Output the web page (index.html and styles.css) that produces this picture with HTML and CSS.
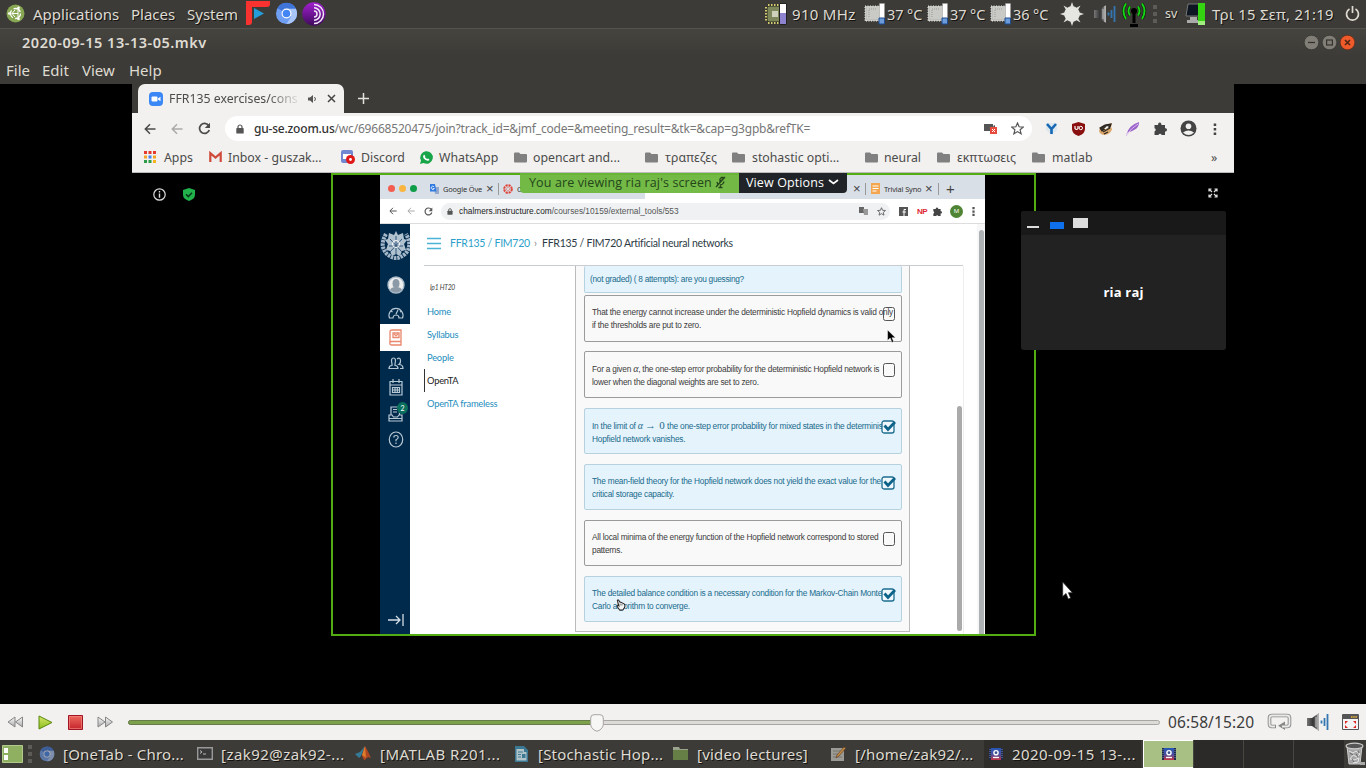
FILE: index.html
```html
<!DOCTYPE html>
<html lang="en">
<head>
<meta charset="utf-8">
<title>2020-09-15 13-13-05.mkv</title>
<link rel="stylesheet" href="styles.css">
</head>
<body>
<svg class="defs" aria-hidden="true">
  <defs>
    <linearGradient id="gray" x2="0" y2="1"><stop stop-color="#fafafa"/><stop offset="1" stop-color="#aaa"/></linearGradient>
    <linearGradient id="lime" x2="0" y2="1"><stop stop-color="#d5e86a"/><stop offset="1" stop-color="#8dbd1c"/></linearGradient>
    <linearGradient id="red" x2="0" y2="1"><stop stop-color="#ee6a5f"/><stop offset="1" stop-color="#c5232b"/></linearGradient>
    <linearGradient id="purple" x2="0" y2="1"><stop stop-color="#a21fd0"/><stop offset="1" stop-color="#3f0a5c"/></linearGradient>
    <linearGradient id="dark" x2="1" y2="0"><stop stop-color="#777"/><stop offset=".5" stop-color="#333"/><stop offset="1" stop-color="#999"/></linearGradient>
    <linearGradient id="film" x2="0" y2="1"><stop stop-color="#2558b5"/><stop offset=".55" stop-color="#4b4fa0"/><stop offset="1" stop-color="#c5333f"/></linearGradient>
  </defs>
  <symbol id="folder" viewBox="0 0 13 11"><path d="M0 1.500Q0 .5 1 .5h4l1.500 1.500h5.500q1 0 1 1v6.500q0 1-1 1H1q-1 0-1-1z" fill="#808080"/></symbol>
  <symbol id="lock" viewBox="0 0 8 10"><path d="M2 4.500V3a2 2 0 0 1 4 0v1.500" fill="none" stroke="#555" stroke-width="1.200"/><rect x=".3" y="4" width="7.400" height="5.600" rx=".7" fill="#555"/></symbol>
  <symbol id="back" viewBox="0 0 12 12"><path d="M11.500 6H1.500M6 1.200 1.300 6 6 10.800" fill="none" stroke="currentColor" stroke-width="1.500"/></symbol>
  <symbol id="reload" viewBox="0 0 13 13"><path d="M10.600 3.500A5 5 0 1 0 11.300 8" fill="none" stroke="currentColor" stroke-width="1.700"/><path d="M12 .8v5.200H6.800z" fill="currentColor"/></symbol>
  <symbol id="star" viewBox="0 0 13 13"><path d="m6.500 1 1.600 3.800 4.100.3-3.100 2.700 1 4-3.600-2.200-3.600 2.200 1-4L.8 5.100l4.100-.3z" fill="none" stroke="#555" stroke-width="1.200"/></symbol>
  <symbol id="puzzle" viewBox="0 0 13 13"><path d="M.5 3h3.700a1.700 1.700 0 1 1 3.100 0H11v3.300a1.600 1.600 0 1 1 0 3.100V13H7.600a1.600 1.600 0 0 0-3.100 0h-4V9.400a1.600 1.600 0 0 0 0-3.100z" fill="#444"/></symbol>
  <symbol id="sensor" viewBox="0 0 21 22"><path d="M1 3h16v15H1z" fill="#bdbdb9" stroke="#eee" stroke-dasharray="1 1.500"/><path d="M3 4h13v12H3z" fill="#c9c9c6"/><path d="M5 14V6h8" fill="none" stroke="#999" stroke-dasharray="1 1"/><path d="M15.500.5h5v16h-5z" fill="#fff" stroke="#999" stroke-width=".5"/><path d="M15 15h5.500v6H15z" fill="#6b9bd8" stroke="#1e4c93"/></symbol>
  <symbol id="chromium" viewBox="0 0 24 24"><circle cx="12" cy="12" r="11" fill="#6f9ff2"/><path d="M12 12 2.500 6.500A11 11 0 0 1 22 7z" fill="#3f74d8"/><path d="M12 7h9.800a11 11 0 0 1-9.800 16l5-8z" fill="#a9c6fb"/><circle cx="12" cy="12" r="5.200" fill="#fff"/><circle cx="12" cy="12" r="4" fill="#4285f4"/></symbol>
  <symbol id="movie" viewBox="0 0 14 12"><path d="M0 0h14v12H0z" fill="#202b49"/><path d="M2 0h10v12H2z" fill="url(#film)"/><path d="M1 1v10M13 1v10" stroke="#7187bd" stroke-dasharray="1 1"/><circle cx="7" cy="4.700" r="2.100" fill="#39538b" stroke="#fff" stroke-width="1.400"/><path d="M4 9.500h6" stroke="#fff" stroke-width="1.300"/></symbol>
  <symbol id="speaker" viewBox="0 0 23 20"><path d="M1 6h5l7-5v18l-7-5H1z" fill="url(#dark)"/><path d="M10 5v10M12 2v16" stroke="#ddd" stroke-width=".8"/><path d="M15.500 8.500v3M18.500 6v8M21.500 2v16" stroke="#3476b2" stroke-width="1.800"/></symbol>
  <symbol id="check" viewBox="0 0 15 15"><rect x="1" y="2" width="12" height="12" rx="2" fill="#f1f8fd" stroke="#1b6d8f" stroke-width="1.300"/><path d="m3.500 6.500 3.500 4L14 3" fill="none" stroke="#0c638a" stroke-width="2.800"/></symbol>
  <symbol id="canvas-ring" viewBox="0 0 10 10"><circle cx="5" cy="5" r="3.800" fill="none" stroke="#e0453b" stroke-width="2" stroke-dasharray="2.200 .785"/><circle cx="5" cy="5" r="1.700" fill="none" stroke="#e0453b" stroke-width=".8" stroke-dasharray=".8 .535"/></symbol>
</svg>

<header class="panel">
  <svg class="ic" width="19" height="19" viewBox="0 0 19 19"><circle cx="9.500" cy="9.500" r="9" fill="#87a752"/><circle cx="9.500" cy="9.500" r="5" fill="none" stroke="#fff" stroke-width="1.300" stroke-dasharray="8 2.500"/><path d="M9 6l-3 3.500L9 13M6 9.500h6M12 6v7" fill="none" stroke="#fff"/><circle cx="3.200" cy="9.500" r="1.300" fill="#fff"/><circle cx="12.500" cy="3.800" r="1.300" fill="#fff"/><circle cx="12.500" cy="15" r="1.300" fill="#fff"/></svg>
  <span>Applications</span><span>Places</span><span class="sys">System</span>
  <svg class="ic up" width="24" height="24" viewBox="0 0 24 24"><path d="M0 0h24v3q0 3-3 3H6v15q0 3-3 3H0z" fill="#f8332f"/><path d="m8 7 10 5.500L8 18z" fill="#249ddb"/></svg>
  <svg class="ic" width="23" height="23"><use href="#chromium"/></svg>
  <svg class="ic" width="24" height="24" viewBox="0 0 24 24"><circle cx="12" cy="12" r="11.700" fill="url(#purple)"/><path d="M12 2.500a9.500 9.500 0 0 1 0 19M12 5.800a6.200 6.200 0 0 1 0 12.400M12 9a3 3 0 0 1 0 6" fill="none" stroke="#f2e6f8" stroke-width="1.500"/></svg>
  <i></i>
  <svg class="ic" width="24" height="22" viewBox="0 0 24 22"><rect x="3" y="3" width="14" height="16" rx="2" fill="#7d875b" stroke="#252819"/><path d="M4 2h12M4 20h12M2 4v14" stroke="#d8cc73" stroke-width="2" stroke-dasharray="1.500 1.500"/><path d="M8 8h6v6H8z" fill="#cfd1bd"/><path d="M15.500.5h7v21h-7z" fill="#fff" stroke="#222"/><path d="M16 10h6v11h-6z" fill="#8d83cf"/></svg>
  <span class="freq">910 MHz</span>
  <svg class="ic" width="21" height="22"><use href="#sensor"/></svg><span class="tight">37 °C</span>
  <svg class="ic" width="21" height="22"><use href="#sensor"/></svg><span class="tight">37 °C</span>
  <svg class="ic" width="21" height="22"><use href="#sensor"/></svg><span class="tight">36 °C</span>
  <svg class="ic" width="24" height="24" viewBox="0 0 24 24"><path d="m12 0 1.800 5h-3.600zM12 24l-1.800-5h3.600zM0 12l5-1.800v3.600zM24 12l-5 1.800v-3.600zM3.500 3.500 8 6 6 8zM20.500 3.500 18 8l-2-2zM3.500 20.500 6 16l2 2zM20.500 20.500 16 18l2-2z" fill="#ddd"/><circle cx="12" cy="12" r="7.800" fill="#e5e5e1"/></svg>
  <svg class="ic" width="23" height="20"><use href="#speaker"/></svg>
  <svg class="ic" width="24" height="26" viewBox="0 0 24 26"><path d="M12 9v13M8 24.500h8" stroke="#000" stroke-width="3"/><circle cx="12" cy="10" r="3" fill="#000"/><path d="M8 5.500q-3 4.500 0 9M16 5.500q3 4.500 0 9M4 2.500Q-1 10 4 18M20 2.500q5 7.500 0 15.500" fill="none" stroke="#0c2a08" stroke-width="3"/><path d="M8 5.500q-3 4.500 0 9M16 5.500q3 4.500 0 9M4 2.500Q-1 10 4 18M20 2.500q5 7.500 0 15.500" fill="none" stroke="#15d915" stroke-width="1.800"/></svg>
  <b class="grip"></b>
  <span class="sv">sv</span>
  <svg class="ic" width="22" height="22" viewBox="0 0 22 22"><path d="M3 1h12v12H1z" fill="#0e1523" stroke="#777"/><path d="M5 14h7v3h3v3H2v-3h3z" fill="#aaa"/><path d="M13 0h7v22h-7z" fill="#35d410"/><path d="M13 18h7v4h-7z" fill="#a1ee80"/></svg>
  <span class="date">Τρι 15 Σεπ, 21:19</span>
  <svg class="ic" width="15" height="17" viewBox="0 0 15 17"><path d="M4.500 4a6 6 0 1 0 6 0M7.500 1v7" fill="none" stroke="#dfdbd2" stroke-width="1.700"/></svg>
</header>

<div class="titlebar">
  <span class="title">2020-09-15 13-13-05.mkv</span>
  <span class="wbtns">
    <svg width="15" height="15" viewBox="0 0 15 15"><circle cx="7.500" cy="7.500" r="7.300" fill="#807e76" stroke="#31302c" stroke-width=".7"/><path d="M4 7.500h7" stroke="#34332f" stroke-width="1.300"/></svg>
    <svg width="15" height="15" viewBox="0 0 15 15"><circle cx="7.500" cy="7.500" r="7.300" fill="#807e76" stroke="#31302c" stroke-width=".7"/><rect x="4.600" y="5" width="5.800" height="5" fill="none" stroke="#34332f" stroke-width="1.200"/></svg>
    <svg width="15" height="15" viewBox="0 0 15 15"><circle cx="7.500" cy="7.500" r="7.300" fill="#ee5a2a" stroke="#5b2a18" stroke-width=".7"/><path d="m5 5 5 5M10 5l-5 5" stroke="#4c2415" stroke-width="1.500"/></svg>
  </span>
</div>
<nav class="menubar"><span>File</span><span>Edit</span><span>View</span><span>Help</span></nav>

<main class="video">
  <section class="chrome">
    <div class="strip">
      <div class="tab">
        <svg width="14" height="14" viewBox="0 0 14 14"><rect width="14" height="14" rx="4" fill="#3b87f5"/><rect x="2.500" y="4.500" width="6" height="5" rx="1" fill="#fff"/><path d="m9 6.500 2.500-1.700v4.400L9 7.500z" fill="#fff"/></svg>
        <span class="tabname">FFR135 exercises/cons</span>
        <svg width="9" height="8" viewBox="0 0 9 8"><path d="M0 2.500h2L5 0v8L2 5.500H0z" fill="#555"/><path d="M6.500 2q2 2 0 4" fill="none" stroke="#555"/></svg>
        <svg width="9" height="9" viewBox="0 0 9 9"><path d="m1 1 7 7M8 1 1 8" stroke="#444" stroke-width="1.500"/></svg>
      </div>
      <svg class="plus" width="11" height="11" viewBox="0 0 11 11"><path d="M5.500 0v11M0 5.500h11" stroke="#e4e2dc" stroke-width="1.500"/></svg>
    </div>
    <div class="bar">
      <svg width="12" height="12"><use href="#back"/></svg>
      <svg class="fwd" width="12" height="12"><use href="#back"/></svg>
      <svg width="13" height="13"><use href="#reload"/></svg>
      <div class="omni">
        <svg width="8" height="10"><use href="#lock"/></svg>
        <span class="url"><b>gu-se.zoom.us</b>/wc/69668520475/join?track_id=&amp;jmf_code=&amp;meeting_result=&amp;tk=&amp;cap=g3gpb&amp;refTK=</span>
        <svg width="13" height="11" viewBox="0 0 13 11"><path d="M0 1h9v7H0zM9 3l2-1v5z" fill="#555"/><path d="M6 4h7v7H6z" fill="#e64b3c"/><path d="m8 6 3 3M11 6 8 9" stroke="#fff"/></svg>
        <svg width="13" height="13"><use href="#star"/></svg>
      </div>
      <svg width="13" height="14" viewBox="0 0 13 14"><path d="M1 1h11v7l-5.500 5L1 8z" fill="#dde7ee"/><path d="m2 2 4.500 5L11 2M6.500 6v6" fill="none" stroke="#1767b4" stroke-width="2.600"/></svg>
      <svg width="13" height="14" viewBox="0 0 13 14"><path d="M6.500 0 13 2v5q0 5-6.500 7Q0 12 0 7V2z" fill="#8a1010"/><path d="M3 4v2.500q1.500 2 3 0V4" fill="none" stroke="#fff" stroke-width="1.200"/><circle cx="8.800" cy="6" r="1.700" fill="none" stroke="#fff"/></svg>
      <svg width="14" height="12" viewBox="0 0 14 12"><path d="M0 8q1-5 6-6l7-2-1 4 1 2q-1 5-7 6-5 0-6-4z" fill="#dba96c"/><path d="m1 5 5-3 6-1-1 3-4 1-4 3zM4 9l7-4M5 11l4-2" stroke="#2b2520" stroke-width="1.200" fill="#39322b"/><path d="m5 6 3-3 2 1-3 2z" fill="#fff"/></svg>
      <svg width="14" height="14" viewBox="0 0 14 14"><path d="M0 13Q3 3 13 0q0 6-5 8-3 2-6 2z" fill="#9b61ca"/><path d="M0 14Q5 6 12 2" stroke="#d9bdee" fill="none"/></svg>
      <svg width="13" height="13"><use href="#puzzle"/></svg>
      <svg width="17" height="17" viewBox="0 0 17 17"><circle cx="8.500" cy="8.500" r="8" fill="#444"/><circle cx="8.500" cy="6.200" r="2.800" fill="#f2f1ef"/><path d="M3 12.500q5.500-4 11 0-5.500 5-11 0" fill="#f2f1ef"/></svg>
      <svg width="4" height="12" viewBox="0 0 4 12"><path d="M.7.500h2.500v2.500H.7zM.7 5h2.500v2.500H.7zM.7 9.500h2.500V12H.7z" fill="#444"/></svg>
    </div>
    <div class="marks">
      <svg width="12" height="12" viewBox="0 0 12 12"><path d="M0 1.500h12" stroke="#e33b2e" stroke-width="3" stroke-dasharray="3 1.500"/><path d="M0 6h3M9 6h3" stroke="#f5a623" stroke-width="3"/><path d="M4.500 6h3" stroke="#4285f4" stroke-width="3"/><path d="M0 10.500h7.500" stroke="#2d9b48" stroke-width="3" stroke-dasharray="3 1.500"/><path d="M9 10.500h3" stroke="#f5b41f" stroke-width="3"/></svg><span>Apps</span>
      <svg width="13" height="10" viewBox="0 0 13 10"><path d="M1 0h11v10H1z" fill="#eee"/><path d="M1.300 10V1.200l5.200 4.300 5.200-4.300V10" fill="none" stroke="#cf4a3a" stroke-width="2.200"/></svg><span>Inbox - guszak...</span>
      <svg width="14" height="14" viewBox="0 0 14 14"><rect width="12" height="13" rx="2" fill="#7187d2"/><path d="M2 4h8v5H2z" fill="#fff"/><circle cx="9.500" cy="9.500" r="4.500" fill="#e01717"/><circle cx="9.500" cy="9.500" r="1.400" fill="#fff"/></svg><span>Discord</span>
      <svg width="13" height="13" viewBox="0 0 13 13"><path d="M0 13 1 9.500A6.300 6.300 0 1 1 3.500 12z" fill="#18a54a"/><path d="M4 3.500 5.300 5 5 6.200l2 1.800 1.200-.4 1.400 1.300q-1.500 1.600-4 .1T3 5.500z" fill="#fff"/></svg><span>WhatsApp</span>
      <svg width="13" height="11"><use href="#folder"/></svg><span>opencart and...</span>
      <svg width="13" height="11"><use href="#folder"/></svg><span>τραπεζες</span>
      <svg width="13" height="11"><use href="#folder"/></svg><span>stohastic opti...</span>
      <svg width="13" height="11"><use href="#folder"/></svg><span>neural</span>
      <svg width="13" height="11"><use href="#folder"/></svg><span>εκπτωσεις</span>
      <svg width="13" height="11"><use href="#folder"/></svg><span>matlab</span>
      <span class="more">»</span>
    </div>
  </section>

  <section class="meeting">
    <div class="badges">
      <svg width="13" height="13" viewBox="0 0 13 13"><circle cx="6.500" cy="6.500" r="5.700" fill="none" stroke="#ddd" stroke-width="1.200"/><path d="M6.500 5.500v4.200M6.500 3v1.400" stroke="#ddd" stroke-width="1.400"/></svg>
      <svg width="12" height="13" viewBox="0 0 12 13"><path d="m6 0 6 2v4.500Q12 11 6 13 0 11 0 6.500V2z" fill="#22b24c"/><path d="m3 6.300 2.300 2.300L9 4.700" fill="none" stroke="#06391a" stroke-width="1.500"/></svg>
    </div>
    <div class="frame">
      <div class="shared">
        <div class="mtabs">
          <i class="dot r"></i><i class="dot y"></i><i class="dot g"></i>
          <svg width="9" height="10" viewBox="0 0 9 10"><path d="M4 3h5v7H5z" fill="#95aaca"/><path d="M0 0h5l1.500 7.500H0z" fill="#317be1"/><path d="M4 2.800A1.600 1.600 0 1 0 4.300 4.500H2.800" stroke="#fff" fill="none" stroke-width=".8"/></svg><span>Google Öve</span><em>×</em><hr>
          <svg width="10" height="10"><use href="#canvas-ring"/></svg><span>C</span>
          <div class="activetab"></div>
          <em>×</em><hr><svg width="9" height="11" viewBox="0 0 9 11"><path d="M0 0h9v11H0z" fill="#f3a64f"/><path d="M1.500 3h6M1.500 5.500h6M1.500 8h4" stroke="#fff"/></svg><span>Trivial Syno</span><em>×</em><hr><em class="mplus">+</em>
        </div>
        <div class="mbar">
          <svg width="8" height="8"><use href="#back"/></svg>
          <svg class="fwd" width="8" height="8"><use href="#back"/></svg>
          <svg width="9" height="9"><use href="#reload"/></svg>
          <div class="momni"><svg width="6" height="7"><use href="#lock"/></svg><span><b>chalmers.instructure.com</b>/courses/10159/external_tools/553</span>
            <svg width="9" height="8" viewBox="0 0 9 8"><path d="M0 0h5v6H0z" fill="#666"/><path d="M4 2h5v6H5z" fill="#999"/></svg><svg width="9" height="9"><use href="#star"/></svg></div>
          <svg width="9" height="9" viewBox="0 0 9 9"><path d="M0 0h9v9H0z" fill="#555"/><path d="M5 9V2.500h2M3.500 5H7" stroke="#fff" fill="none"/></svg>
          <strong>NP</strong>
          <svg width="9" height="9"><use href="#puzzle"/></svg>
          <span class="ava">M</span>
          <svg width="3" height="9" viewBox="0 0 4 12"><path d="M.5 0h3v3h-3zM.5 4.500h3v3h-3zM.5 9h3v3h-3z" fill="#555"/></svg>
        </div>
        <div class="lms">
          <aside class="rail">
            <svg class="crest" width="30" height="34" viewBox="0 0 30 34"><path d="M5 5Q-2 17 6 25q9 8 18 0 8-8 1-20" fill="none" stroke="#a5b8c9" stroke-width="4" stroke-dasharray="2.500 .8"/><path d="M15 2l2 4 5-2 1 6 3 1-3 4 2 6-4 1-2 5-4-2-4 2-2-5-4-1 2-6-3-4 3-1 1-6 5 2z" fill="#b0c1cf"/><path d="m9 10 12 13M21 10 9 23M15 7v18M8 17h14" stroke="#33577a" stroke-width="1"/><circle cx="15" cy="15" r="3.500" fill="none" stroke="#fff"/></svg>
            <svg width="18" height="20" viewBox="0 0 18 20"><circle cx="9" cy="10" r="8" fill="#eee" stroke="#a9bbc9" stroke-width="1.400"/><ellipse cx="9" cy="8.500" rx="3.500" ry="4.500" fill="#8c9aa7"/><path d="M3 15q1-3 6-3t6 3q-6 5-12 0" fill="#8c9aa7"/></svg>
            <svg width="16" height="13" viewBox="0 0 16 13" fill="none" stroke="#b7c8d5" stroke-width="1.200"><path d="M1.500 12a7 7 0 1 1 13 0H11a3 3 0 0 0-6 0zM8 8l2-4M3 5l1.500 1M12 6l1.500-1"/></svg>
            <div class="sel"><svg width="13" height="17" viewBox="0 0 13 17" fill="none" stroke="#e9866b" stroke-width="1.300"><path d="M12 13V1H3Q1 1 1 3v11M12 12.500H2.500a1.700 1.700 0 1 0 0 3.500H12v-3M4 4h6v4.500H4z"/><path d="m5 5 2 1.700L9 5"/></svg></div>
            <svg width="16" height="13" viewBox="0 0 16 13" fill="none" stroke="#b7c8d5" stroke-width="1.200"><path d="M1 11.500q0-3 3-3V7Q2.500 1 5.500 1T7 7v1.500q3 0 3 3zM9 2q3-2 3.500 1T11 7.500q4 0 4 4h-3"/></svg>
            <svg width="14" height="17" viewBox="0 0 14 17" fill="none" stroke="#b7c8d5" stroke-width="1.200"><path d="M1 2.500h12V16H1zM1 6h12M4 0v4M10 0v4M3.500 8.500h7v5h-7zM6 8v6M8.300 8v6M3 11h8"/></svg>
            <div class="inbox"><svg width="15" height="16" viewBox="0 0 15 16" fill="none" stroke="#b7c8d5" stroke-width="1.200"><path d="M3 9V1h8.500v8M5 3.500h4M5 6h4M1 9h3l1.500 2h4L11 9h3v6H1zM1 12.500h13"/></svg><sup>2</sup></div>
            <svg width="16" height="17" viewBox="0 0 16 17" fill="none" stroke="#b7c8d5" stroke-width="1.200"><ellipse cx="8" cy="8.500" rx="6.700" ry="7.500"/><path d="M5.800 6.500q0-2 2.200-2t2.200 2Q10 8 8 8.800v1.500M8 11.500V13"/></svg>
            <svg class="exit" width="16" height="12" viewBox="0 0 16 12" fill="none" stroke="#d2dde5" stroke-width="1.300"><path d="M0 6h12M8 2l4 4-4 4M15 0v12"/></svg>
          </aside>
          <div class="page">
            <div class="crumbs"><svg width="14" height="13" viewBox="0 0 14 13"><path d="M0 1.500h14M0 6.500h14M0 11.500h14" stroke="#4bb2d8" stroke-width="1.300"/></svg><a>FFR135 / FIM720</a><i>›</i><span>FFR135 / FIM720 Artificial neural networks</span></div>
            <div class="cols">
              <ul class="cnav"><li class="term">lp1 HT20</li><li>Home</li><li>Syllabus</li><li>People</li><li class="on">OpenTA</li><li>OpenTA frameless</li></ul>
              <div class="quiz">
                <div class="q info">(not graded) ( 8 attempts): are you guessing?</div>
                <div class="q n"><p>That the energy cannot increase under the deterministic Hopfield dynamics is valid only</p><p>if the thresholds are put to zero.</p><i class="box"></i></div>
                <div class="q n"><p>For a given <var>α</var>, the one-step error probability for the deterministic Hopfield network is</p><p>lower when the diagonal weights are set to zero.</p><i class="box"></i></div>
                <div class="q c"><p class="q3">In the limit of <var>α</var> <tt>→ 0</tt> the one-step error probability for mixed states in the determinis</p><p>Hopfield network vanishes.</p><svg class="tick" width="15" height="15"><use href="#check"/></svg></div>
                <div class="q c"><p>The mean-field theory for the Hopfield network does not yield the exact value for the</p><p>critical storage capacity.</p><svg class="tick" width="15" height="15"><use href="#check"/></svg></div>
                <div class="q n"><p>All local minima of the energy function of the Hopfield network correspond to stored</p><p>patterns.</p><i class="box"></i></div>
                <div class="q c"><p>The detailed balance condition is a necessary condition for the Markov-Chain Monte</p><p>Carlo algorithm to converge.</p><svg class="tick" width="15" height="15"><use href="#check"/></svg></div>
              </div>
              <div class="track"><i></i></div>
            </div>
          </div>
          <div class="outer"><i></i></div>
        </div>
      </div>
    </div>
    <div class="notice"><span class="who">You are viewing ria raj's screen <svg width="11" height="12" viewBox="0 0 11 12" fill="none" stroke="#24461a" stroke-width="1.300"><path d="M1 11 10 1M6.500 1.500 5 3v3l3-3V1.500zM2 6q.5 2 1.500 2.500M5 9q3.500-.5 4-3.500M5.500 9v2.500M3.500 11.500h4"/></svg></span><span class="opts">View Options <svg width="11" height="6" viewBox="0 0 11 6"><path d="m1 1 4.500 3.500L10 1" fill="none" stroke="#fff" stroke-width="1.700"/></svg></span></div>
    <svg class="full" width="10" height="10" viewBox="0 0 10 10"><path d="M1 3.500V1h2.500M6.500 1H9v2.500M9 6.500V9H6.500M3.500 9H1V6.500M1 1l3 3M9 1 6 4M9 9 6 6M1 9l3-3" stroke="#ddd" stroke-width="1.200" fill="none"/></svg>
    <div class="thumb"><div class="thead"><i class="min"></i><i class="one"></i><i class="two"></i></div><div class="name">ria raj</div></div>
    <svg class="cur c1" width="9" height="14" viewBox="0 0 10 16"><path d="M.5 1v12l3-2.600 2 5 2-1-2-4.400H9.500z" fill="#000" stroke="#fff" stroke-width=".5"/></svg>
    <svg class="cur c2" width="11" height="19" viewBox="0 0 11 19"><path d="M.7 1v14.500l3.300-3L6.300 18l2.300-1-2.200-5.300h4z" fill="#fff" stroke="#222" stroke-width=".7"/></svg>
    <svg class="cur c3" width="10" height="12" viewBox="0 0 10 13"><path d="M1 1.500Q2-.2 3.500 3L8 5q2 1 1 4l-2 3H3.500L.7 8q0-2 2-.5z" fill="#f5f5f5" stroke="#222" stroke-width="1.100"/><path d="M4 5v2M6 5.500V7" stroke="#222" stroke-width=".7"/></svg>
  </section>
</main>

<footer class="player">
  <svg width="17" height="12" viewBox="0 0 17 12"><path d="M8 1v10L1 6zM15.500 1v10l-7-5z" fill="url(#gray)" stroke="#858585"/></svg>
  <svg width="15" height="15" viewBox="0 0 15 15"><path d="m1 1 13 6.500L1 14z" fill="url(#lime)" stroke="#57880c"/></svg>
  <svg width="15" height="15" viewBox="0 0 15 15"><path d="M.5.500h14v14H.5z" fill="url(#red)" stroke="#a01525"/><path d="M1.500 1.500h12v12h-12z" fill="none" stroke="#f0857b" stroke-width=".7"/></svg>
  <svg width="17" height="12" viewBox="0 0 17 12"><path d="M1 1v10l7-5zM8.500 1v10l7-5z" fill="url(#gray)" stroke="#858585"/></svg>
  <div class="seek"><div class="done"></div><svg class="knob" width="14" height="18" viewBox="0 0 14 18"><path d="M4 .7h6q3.300 0 3.300 3.300v7q0 2-3.300 5-3 2.500-6 0-3.300-3-3.300-5V4Q.7.700 4 .7z" fill="#f7f7f6" stroke="#a9a6a2"/></svg></div>
  <span class="time">06:58/15:20</span>
  <svg width="25" height="18" viewBox="0 0 25 18"><path d="M9 13.500H5q-2.500 0-2.500-2.500V5q0-2.500 2.500-2.500h15q2.500 0 2.500 2.500v6q0 2.500-2.500 2.500h-3" fill="none" stroke="#888" stroke-width="3.600"/><path d="M18 8.500V17l-7-4.200z" fill="#888"/><path d="M8 13.500H5q-2.500 0-2.500-2.500V5q0-2.500 2.500-2.500h15q2.500 0 2.500 2.500v6q0 2.500-2.500 2.500h-5" fill="none" stroke="#e9e9e8" stroke-width="1.800"/></svg>
  <svg width="23" height="20"><use href="#speaker"/></svg>
  <svg width="17" height="16" viewBox="0 0 17 16"><path d="M.5.500h16v15H.5z" fill="#f4f4f4" stroke="#555"/><path d="M1 1h15v4H1z" fill="#555"/><path d="M9 3h6" stroke="#f0b63a" stroke-width="1.500" stroke-dasharray="1.500 .7"/><path d="M3 7h3L3 10zM14 7v3l-3-3zM3 14v-3l3 3zM14 14h-3l3-3z" fill="#d22"/></svg>
</footer>

<footer class="tasks">
  <svg width="21" height="18" viewBox="0 0 21 18"><path d="M.5.500h20v17H.5z" fill="#8fb061" stroke="#b1cb8c"/><path d="M2 3h4v5H2zM2 10h4v5H2z" fill="#fff"/></svg>
  <b class="grip"></b>
  <svg class="dim" width="16" height="16"><use href="#chromium"/></svg><span>[OneTab - Chro...</span>
  <svg width="16" height="13" viewBox="0 0 16 13"><path d="M.7.700h14.600v11.600H.7z" fill="#393939" stroke="#999" stroke-width="1.400"/><path d="m3 3.500 2 1.500-2 1.500M6 7h3" fill="none" stroke="#bbb"/></svg><span class="wide">[zak92@zak92-...</span>
  <svg width="16" height="15" viewBox="0 0 16 15"><path d="m0 8 5-2 5-6-4 10-2 2z" fill="#357b98"/><path d="M10 0q3 5 6 12-4-2-6 2-1 1-3-4z" fill="#ad4621"/><path d="m10 0 1 12-4-3z" fill="#df7b2c"/></svg><span class="wide">[MATLAB R201...</span>
  <svg width="13" height="16" viewBox="0 0 13 16"><path d="M0 0h9l4 4v12H0z" fill="#3a7893"/><path d="M1.500 3H9v3h2.500v8.500h-10z" fill="#b1c4ca"/><path d="M3 6h5M3 8.500h3M3 11h3" stroke="#3a7893"/><path d="M7 8h3.500v4H7z" fill="#3a7893"/></svg><span>[Stochastic Hop...</span>
  <svg width="15" height="13" viewBox="0 0 15 13"><path d="M0 0h6l1 2h8v11H0z" fill="#9ba38c"/><path d="M0 3h15v10H0z" fill="#657f46"/></svg><span>[video lectures]</span>
  <svg width="15" height="16" viewBox="0 0 15 16"><path d="M0 2h13v13H0z" fill="#9b9a94"/><path d="M2 5h7M2 8h5M2 11h9" stroke="#77766f"/><path d="m5 12 1-3 7-8 2 1-7 8z" fill="#c08a43" stroke="#593620" stroke-width=".6"/></svg><span>[/home/zak92/...</span>
  <div class="current"><svg width="14" height="12"><use href="#movie"/></svg><span class="wide">2020-09-15 13-...</span></div>
  <div class="ws on"><svg width="14" height="12"><use href="#movie"/></svg></div><div class="ws"></div><div class="ws"></div><div class="ws"></div>
  <svg width="22" height="24" viewBox="0 0 22 24"><path d="M3 4h15l-2 18H5z" fill="#a5a5a5" stroke="#ccc"/><ellipse cx="10.500" cy="4" rx="8.500" ry="2.800" fill="#555" stroke="#ccc" stroke-width="1.200"/><path d="m5 9 4 2 3-2 4 3-3 3-4-2-3 4 4 1 5-2-1 4-5 1" fill="none" stroke="#e5e5e5"/><path d="M6 11l3 2M12 12l2 3M8 17l2 3M14 9l1 2" stroke="#666"/><path d="M16 20h5v3h-5z" fill="#aaa"/></svg>
</footer>
</body>
</html>
```
FILE: styles.css
```css
*{box-sizing:border-box}
body{margin:0;width:1366px;height:768px;overflow:hidden;background:#000;display:grid;grid-template-rows:28px 28px 28px 620px 36px 28px;font-family:"Noto Sans","Open Sans",sans-serif;font-size:15px;color:#dfdbd2}
svg{display:block;flex:none;overflow:visible}
.defs{position:absolute;width:0;height:0}
span,p,a,li{white-space:nowrap}
.panel{display:grid;align-items:center;background:#3c3b37;padding-left:6px;text-shadow:1px 1px 0 #151412;line-height:28px;height:28px;grid-template-rows:27px;grid-template-columns:27px 98px 56px 59px 29px 27px 24px 438px 28px 72px 23px 40px 23px 40px 23px 47px 33px 29px 31px 12px 20px 27px 133px 15px}
.panel .tight{font-size:14.500px;letter-spacing:-.1px}
.panel .freq{letter-spacing:.3px}
.panel .sv{font-size:12.500px}
.panel .date{font-size:14.800px;letter-spacing:.3px}
.panel .up{margin-top:-1px}
.grip{width:4px;height:18px;background:repeating-linear-gradient(#5d5c57 0 4px,transparent 4px 7px)}
.titlebar{display:flex;justify-content:space-between;align-items:center;background:linear-gradient(#45443f,#3c3b37);border-top:1px solid #55534d;padding:0 11px 1px 22px}
.title{font-weight:600;font-size:14.500px;letter-spacing:.52px}
.wbtns{display:flex;gap:3px}
.menubar{display:grid;grid-template-columns:36px 40px 47px 50px;padding-left:6px;background:#3c3b37;font-size:15px;line-height:28px}
.video{background:#000;padding-left:132px}
.chrome{width:1102px;height:89px;background:#f2f1ef;border-bottom:1px solid #bbb;color:#4b4b4b;font-size:12px;display:grid;grid-template-rows:29px 31px 28px}
.strip{background:#3c3b37;display:flex;align-items:center;padding-left:6px}
.tab{width:206px;height:29px;background:#f2f1ef;border-radius:7px 7px 0 0;display:grid;grid-template-columns:20px 139px 19px 9px;align-items:center;padding-left:11px}
.tabname{overflow:hidden;width:132px;font-size:12.300px;-webkit-mask:linear-gradient(90deg,#000 75%,transparent);mask:linear-gradient(90deg,#000 75%,transparent)}
.plus{margin-left:14px}
.bar{display:grid;grid-template-columns:27px 27px 27px 820px 27px 27px 27px 28px 26px 33px 4px;padding-left:12px;align-items:center;color:#4b4b4b}
.fwd{color:#aaa}
.omni{height:25px;width:807px;background:#fff;border-radius:13px;display:grid;grid-template-columns:18px 730px 27px 13px;padding-left:11px;align-items:center}
.url{color:#777;letter-spacing:-.2px}
.url b{font-weight:500;color:#333}
.marks{display:grid;grid-template-columns:20px 45px 19px 113px 20px 59px 19px 75px 19px 112px 20px 67px 20px 113px 19px 53px 20px 75px 20px 159px 10px;align-items:center;padding-left:12px;height:26px;font-size:12.300px}
.meeting{position:relative;width:1102px;height:531px}
.badges{position:absolute;left:21px;top:15px;display:flex;gap:17px}
.frame{margin-left:199px;width:705px;height:463px;border:2px solid #52ad12;padding-left:47px}
.shared{width:605px;height:459px;background:#fff;color:#333;display:grid;grid-template-rows:24px 24px 411px}
.mtabs{background:#d9dfe6;display:grid;grid-template-columns:11px 11px 20px 13px 43px 12px 5px 14px 128px 208px 12px 6px 13px 41px 13px 8px 10px;align-items:center;padding-left:8px;font-size:7.400px;letter-spacing:-.15px;height:24px;padding-top:3px}
.mtabs span{overflow:hidden}
.mtabs em{font:13px/10px "Liberation Sans",sans-serif;color:#444}
.mtabs hr{width:1px;height:12px;border:0;background:#999;margin:0}
.dot{width:7px;height:7px;border-radius:50%}
.r{background:#f25d50}.y{background:#f9b53f}.g{background:#0e9d48}
.activetab{align-self:end;width:75px;height:21px;background:#fff;border-radius:5px 5px 0 0}
.mtabs .mplus{font-size:15px}
.mbar{display:grid;grid-template-columns:18px 17px 17px 458px 18px 16px 17px 22px 4px;padding-left:9px;align-items:center;color:#555;font-size:8.300px;background:#fff}
.momni{height:17px;width:449px;background:#eff1f3;border-radius:9px;display:grid;grid-template-columns:12px 400px 18px 9px;align-items:center;padding-left:6px;font-family:"Liberation Sans",sans-serif}
.momni b{font-weight:400;color:#222}
.mbar strong{font:700 8px "Liberation Sans",sans-serif;color:#e02735;letter-spacing:-.5px}
.ava{width:13px;height:13px;border-radius:50%;background:#4e8433;color:#fff;font-size:6px;line-height:13px;text-align:center}
.lms{display:grid;grid-template-columns:30px 567px 8px;height:411px;border-top:1px solid #ddd;font-family:Lato,sans-serif}
.rail{background:#002a4c;display:flex;flex-direction:column;align-items:center;padding:5px 0 0 1px}
.crest{margin-bottom:12px}
.rail>svg:nth-child(2){margin-bottom:11px}
.sel{width:30px;height:27px;background:#fff;display:flex;align-items:center;justify-content:center;margin:5px 0 6px -1px}
.rail>svg:nth-child(5){margin-bottom:9px}
.inbox{position:relative;margin:10px 0 9px}
.inbox sup{position:absolute;left:9px;top:-4px;width:11px;height:12px;border-radius:50%;background:#0b6f5d;color:#fff;font-size:7px;line-height:12px;text-align:center}
.exit{margin-top:auto;margin-bottom:8px}
.page{background:#fff;padding-left:14px}
.crumbs{height:42px;border-bottom:1px solid #c9cdd1;margin-right:14px;padding:0 0 3px 3px;display:grid;grid-template-columns:23px 84px 8px 1fr;align-items:center;font-size:10.500px;letter-spacing:-.26px;color:#2d3b45}
.crumbs a{color:#2c9fca}.crumbs i{font-style:normal;color:#888}
.cols{display:grid;grid-template-columns:151px 336px 64px;height:368px}
.cnav{list-style:none;margin:0;padding:9.500px 0 0;font-size:9.300px;letter-spacing:-.2px;color:#1e8dbd}
.cnav li{height:23.100px;line-height:23px;padding-left:3px}
.cnav .term{font-size:6.700px;font-style:italic;color:#444;padding-left:6px;height:24px}
.cnav .on{color:#222;border-left:1.500px solid #333;padding-left:2px}
.quiz{border:1px solid #bbb;border-top:0;background:#f9f9f9;padding:0 8px;height:366px;display:flex;flex-direction:column;gap:9.400px;font-family:"Liberation Sans",sans-serif;font-size:8.300px;letter-spacing:-.225px;color:#3c3c3c;width:335px}
.q{position:relative;width:318px;height:46.700px;flex:none;border:1px solid #9b9b9b;border-radius:2px;padding:10px 0 0 7px}
.q p{margin:0;line-height:13px}
.q.info{height:27px;margin-bottom:-7px;border-top:0;line-height:13px;padding:7px 0 0 5px;letter-spacing:-.28px}
.q.c,.q.info{background:#e5f3fd;border-color:#b6d2e0;color:#196b8b}
.q var,.q tt{font-family:"Liberation Serif",serif;font-size:10px}
.q tt{font-size:11px;line-height:10px;letter-spacing:.3px}
.box{position:absolute;right:6px;top:11px;width:12px;height:14px;border:1.300px solid #555;border-radius:2.500px}
.tick{position:absolute;right:5px;top:10px}
.track{border-right:1px solid #eee;width:53px;padding:140px 1px 0 0;display:flex;justify-content:flex-end}
.track i{width:5px;height:225px;border-radius:3px;background:#aaa}
.outer{background:#f7f7f7;padding:6px 1px 0 2px}
.outer i{display:block;width:5px;height:404px;border-radius:3px 3px 0 0;background:#aeb1b4}
.notice{position:absolute;left:388px;top:0;height:20px;display:grid;grid-template-columns:219px 108px;font:12.500px/20px "Open Sans",sans-serif;letter-spacing:.12px}
.who{background:rgba(106,182,57,.93);color:#24461a;padding-left:9px;border-radius:0 0 0 4px}
.opts{background:#202428;color:#fff;padding-left:7px;border-radius:0 0 4px 0}
.notice svg{display:inline-block;vertical-align:-1px}
.notice .opts svg{vertical-align:2px}
.full{position:absolute;left:1076px;top:15px}
.thumb{position:absolute;left:889px;top:38px;width:205px;height:139px;background:#222;border-radius:3px;overflow:hidden}
.thead{height:24px;background:#191919;display:flex;align-items:center;padding-left:6px}
.thead i{flex:none}
.min{width:12px;height:2px;background:#ddd;margin:8px 11px 0 0}
.one{width:14px;height:7px;background:#0e71eb;margin:5px 9px 0 0}
.two{width:15px;height:10px;background:#ddd}
.name{height:114px;text-align:center;color:#fff;font:700 13px/115px "Open Sans",sans-serif;letter-spacing:.2px}
.cur{position:absolute}
.c1{left:755px;top:156px}.c2{left:930px;top:408px}.c3{left:484px;top:426px}
.player{background:#f2f1f0;display:grid;grid-template-columns:31px 30px 29px 31px 1040px 99px 39px 36px 17px;padding-left:7px;align-items:center;color:#3c3c3c}
.seek{position:relative;width:1032px;height:5px;background:#dddbd9;border:1px solid #a9a6a2;border-radius:3px}
.done{width:469px;height:5px;margin:-1px;background:#7da04d;border:1px solid #667c48;border-radius:3px}
.knob{position:absolute;left:461px;top:-7px}
.time{font-size:15.500px;letter-spacing:.1px}
.tasks{background:#3c3b37;display:grid;grid-template-rows:28px;grid-template-columns:26px 11px 24px 134px 24px 134px 25px 135px 23px 135px 24px 134px 24px 130px 159px 50px 50px 50px 50px 22px;padding-left:2px;align-items:center;text-shadow:1px 1px 0 #151412;line-height:28px}
.tasks span{letter-spacing:.2px}
.tasks .wide{letter-spacing:.45px}
.tasks>svg,.current svg{margin-top:-1px}
.dim{opacity:.6}
.current{display:grid;grid-template-columns:23px 1fr;background:#2f2e2b;height:28px;width:157px;padding-left:5px;margin-left:-1px;align-items:center}
.ws{height:28px;background:#2b2a28;border-left:1px solid #474641;margin-left:-1px}
.ws.on{background:#a9c085;border:1.500px solid #fff;display:grid;place-items:center}
```
